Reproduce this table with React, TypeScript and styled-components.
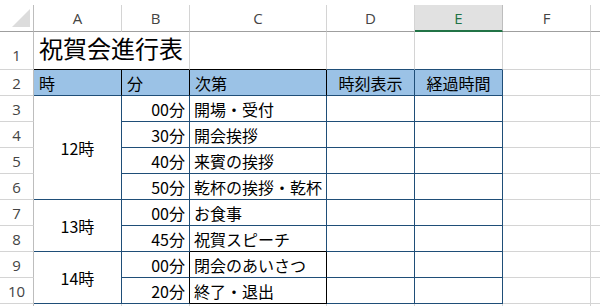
import React from "react";
import styled, { createGlobalStyle } from "styled-components";

const GRID = "#d4d4d4";
const NAVY = "#1f4e78";
const BLACK = "#000000";
const HDR_FILL = "#9bc2e6";

const Global = createGlobalStyle`
  html, body { margin: 0; padding: 0; background: #ffffff; overflow: hidden; }
  * { box-sizing: border-box; }
`;

const Sheet = styled.div`
  width: 600px;
  height: 306px;
  padding-top: 5px;
  overflow: hidden;
  background: #ffffff;
`;

const Grid = styled.div`
  display: grid;
  grid-template-columns: 34px 88px 68px 137px 88px 88px 88px 88px;
  grid-template-rows: 27px 38px 26px repeat(8, 26px) 26px;
  font-family: "Noto Sans CJK JP", "Noto Sans", sans-serif;
  color: #000;
`;

const Corner = styled.div`
  display: flex;
  align-items: flex-end;
  justify-content: flex-end;
  padding: 0 3px 4px 0;
  border-right: 1px solid #bdbdbd;
  border-bottom: 1px solid #9f9f9f;
`;

const ColHead = styled.div<{ $sel?: boolean }>`
  display: flex;
  align-items: center;
  justify-content: center;
  font-family: "Open Sans", "Noto Sans", sans-serif;
  font-size: 15px;
  color: ${(p) => (p.$sel ? "#217346" : "#444444")};
  background: ${(p) => (p.$sel ? "#e1e1e1" : "#ffffff")};
  border-right: 1px solid ${(p) => (p.$sel ? "#bdbdbd" : GRID)};
  border-bottom: ${(p) => (p.$sel ? "2px solid #217346" : "1px solid #9f9f9f")};
  padding-top: ${(p) => (p.$sel ? "1px" : "0")};
`;

const RowHead = styled.div<{ $tall?: boolean }>`
  display: flex;
  align-items: ${(p) => (p.$tall ? "flex-end" : "center")};
  justify-content: center;
  padding-bottom: ${(p) => (p.$tall ? "4px" : "0")};
  font-family: "Open Sans", "Noto Sans", sans-serif;
  font-size: 15px;
  color: #444444;
  border-right: 1px solid #bdbdbd;
  border-bottom: 1px solid ${GRID};
`;

type Align = "left" | "center" | "right";

const Cell = styled.div<{
  $r?: string;
  $b?: string;
  $fill?: string;
  $align?: Align;
  $rows?: number;
  $cols?: number;
}>`
  display: flex;
  align-items: center;
  justify-content: ${(p) =>
    p.$align === "center" ? "center" : p.$align === "right" ? "flex-end" : "flex-start"};
  padding: 1px 4px 0 4px;
  font-size: 16px;
  line-height: 1;
  white-space: nowrap;
  overflow: visible;
  background: ${(p) => p.$fill || "transparent"};
  border-right: 1px solid ${(p) => p.$r || GRID};
  border-bottom: 1px solid ${(p) => p.$b || GRID};
  grid-row: span ${(p) => p.$rows || 1};
  grid-column: span ${(p) => p.$cols || 1};
`;

const Title = styled(Cell)`
  font-size: 24px;
  align-items: flex-end;
  padding: 0 4px 9px 5px;
`;

const HeadCell = styled(Cell)`
  padding-left: ${(p) => (p.$align === "center" ? "4px" : "5px")};
`;

const cols = ["A", "B", "C", "D", "E", "F", ""];

const items = [
  { min: "00分", what: "開場・受付" },
  { min: "30分", what: "開会挨拶" },
  { min: "40分", what: "来賓の挨拶" },
  { min: "50分", what: "乾杯の挨拶・乾杯" },
  { min: "00分", what: "お食事" },
  { min: "45分", what: "祝賀スピーチ" },
  { min: "00分", what: "閉会のあいさつ" },
  { min: "20分", what: "終了・退出" },
];

const groups: Record<number, { label: string; span: number }> = {
  0: { label: "12時", span: 4 },
  4: { label: "13時", span: 2 },
  6: { label: "14時", span: 2 },
};

export default function App() {
  return (
    <>
      <Global />
      <Sheet>
        <Grid>
          <Corner>
            <svg width="18" height="18" viewBox="0 0 18 18">
              <polygon points="18,0 18,18 0,18" fill="#dcdcdc" />
            </svg>
          </Corner>
          {cols.map((c, i) => (
            <ColHead key={i} $sel={c === "E"}>
              {c}
            </ColHead>
          ))}

          <RowHead $tall>1</RowHead>
          <Title $cols={2} $b={BLACK}>
            祝賀会進行表
          </Title>
          <Cell $b={BLACK} />
          <Cell $b={NAVY} />
          <Cell $b={NAVY} />
          <Cell />
          <Cell />

          <RowHead>2</RowHead>
          <HeadCell $fill={HDR_FILL} $r={BLACK} $b={NAVY}>
            時
          </HeadCell>
          <HeadCell $fill={HDR_FILL} $r={BLACK} $b={NAVY}>
            分
          </HeadCell>
          <HeadCell $fill={HDR_FILL} $r={BLACK} $b={NAVY}>
            次第
          </HeadCell>
          <HeadCell $fill={HDR_FILL} $r={NAVY} $b={NAVY} $align="center">
            時刻表示
          </HeadCell>
          <HeadCell $fill={HDR_FILL} $r={NAVY} $b={NAVY} $align="center">
            経過時間
          </HeadCell>
          <Cell />
          <Cell />

          {items.map((it, i) => {
            const boxed = i >= 6;
            const g = groups[i];
            return (
              <React.Fragment key={i}>
                <RowHead>{i + 3}</RowHead>
                {g && (
                  <Cell $rows={g.span} $r={NAVY} $b={NAVY} $align="center">
                    {g.label}
                  </Cell>
                )}
                <Cell $r={boxed ? BLACK : NAVY} $b={NAVY} $align="right">
                  {it.min}
                </Cell>
                <Cell
                  $r={boxed ? BLACK : NAVY}
                  $b={i === 5 || i === 7 ? BLACK : NAVY}
                >
                  {it.what}
                </Cell>
                <Cell $r={NAVY} $b={NAVY} />
                <Cell $r={NAVY} $b={NAVY} />
                <Cell />
                <Cell />
              </React.Fragment>
            );
          })}

          <RowHead />
          {cols.map((_, i) => (
            <Cell key={i} />
          ))}
        </Grid>
      </Sheet>
    </>
  );
}
